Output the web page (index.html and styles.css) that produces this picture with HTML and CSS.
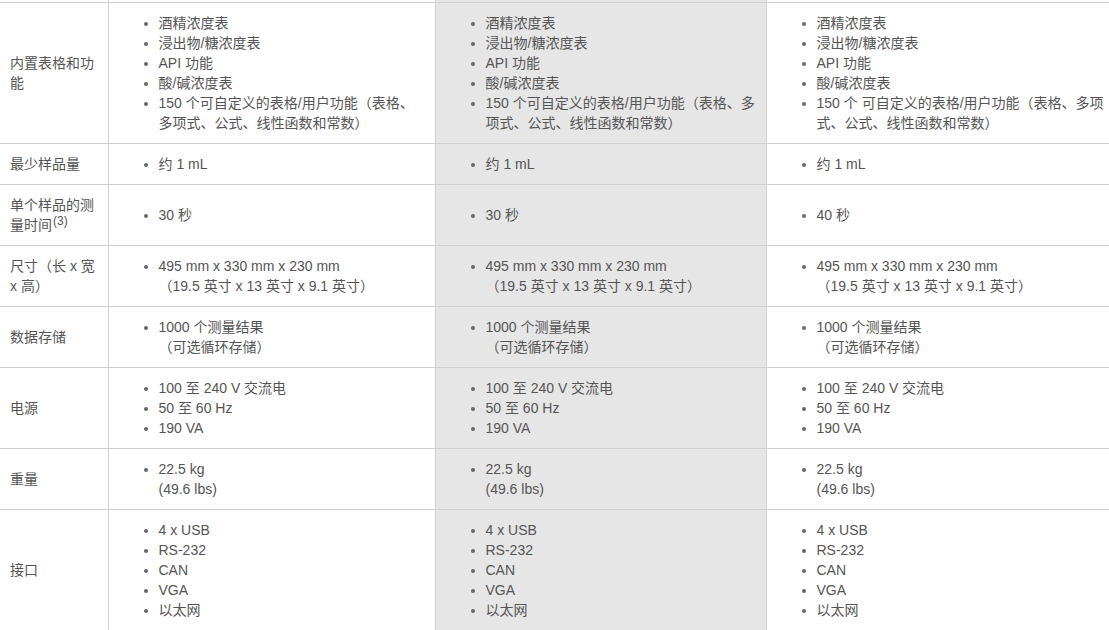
FILE: index.html
```html
<!DOCTYPE html>
<html lang="zh-CN">
<head>
<meta charset="utf-8">
<title>规格</title>
<link rel="stylesheet" href="styles.css">
</head>
<body>
<table class="spec">
  <colgroup>
    <col class="c-label">
    <col class="c-a">
    <col class="c-b">
    <col class="c-c">
  </colgroup>
  <tbody>
    <tr class="cut"><td></td><td></td><td class="alt"></td><td></td></tr>
    <tr>
      <td class="label">内置表格和功能</td>
      <td><ul><li>酒精浓度表</li><li>浸出物/糖浓度表</li><li>API 功能</li><li>酸/碱浓度表</li><li>150 个可自定义的表格/用户功能（表格、多项式、公式、线性函数和常数）</li></ul></td>
      <td class="alt"><ul><li>酒精浓度表</li><li>浸出物/糖浓度表</li><li>API 功能</li><li>酸/碱浓度表</li><li>150 个可自定义的表格/用户功能（表格、多项式、公式、线性函数和常数）</li></ul></td>
      <td><ul><li>酒精浓度表</li><li>浸出物/糖浓度表</li><li>API 功能</li><li>酸/碱浓度表</li><li>150 个 可自定义的表格/用户功能（表格、多项式、公式、线性函数和常数）</li></ul></td>
    </tr>
    <tr>
      <td class="label">最少样品量</td>
      <td><ul><li>约 1 mL</li></ul></td>
      <td class="alt"><ul><li>约 1 mL</li></ul></td>
      <td><ul><li>约 1 mL</li></ul></td>
    </tr>
    <tr>
      <td class="label">单个样品的测量时间<sup class="note">(3)</sup></td>
      <td><ul><li>30 秒</li></ul></td>
      <td class="alt"><ul><li>30 秒</li></ul></td>
      <td><ul><li>40 秒</li></ul></td>
    </tr>
    <tr>
      <td class="label">尺寸（长 x 宽 x 高）</td>
      <td><ul><li>495 mm x 330 mm x 230 mm<br>（19.5 英寸 x 13 英寸 x 9.1 英寸）</li></ul></td>
      <td class="alt"><ul><li>495 mm x 330 mm x 230 mm<br>（19.5 英寸 x 13 英寸 x 9.1 英寸）</li></ul></td>
      <td><ul><li>495 mm x 330 mm x 230 mm<br>（19.5 英寸 x 13 英寸 x 9.1 英寸）</li></ul></td>
    </tr>
    <tr>
      <td class="label">数据存储</td>
      <td><ul><li>1000 个测量结果<br>（可选循环存储）</li></ul></td>
      <td class="alt"><ul><li>1000 个测量结果<br>（可选循环存储）</li></ul></td>
      <td><ul><li>1000 个测量结果<br>（可选循环存储）</li></ul></td>
    </tr>
    <tr>
      <td class="label">电源</td>
      <td><ul><li>100 至 240 V 交流电</li><li>50 至 60 Hz</li><li>190 VA</li></ul></td>
      <td class="alt"><ul><li>100 至 240 V 交流电</li><li>50 至 60 Hz</li><li>190 VA</li></ul></td>
      <td><ul><li>100 至 240 V 交流电</li><li>50 至 60 Hz</li><li>190 VA</li></ul></td>
    </tr>
    <tr>
      <td class="label">重量</td>
      <td><ul><li>22.5 kg<br>(49.6 lbs)</li></ul></td>
      <td class="alt"><ul><li>22.5 kg<br>(49.6 lbs)</li></ul></td>
      <td><ul><li>22.5 kg<br>(49.6 lbs)</li></ul></td>
    </tr>
    <tr>
      <td class="label">接口</td>
      <td><ul><li>4 x USB</li><li>RS-232</li><li>CAN</li><li>VGA</li><li>以太网</li></ul></td>
      <td class="alt"><ul><li>4 x USB</li><li>RS-232</li><li>CAN</li><li>VGA</li><li>以太网</li></ul></td>
      <td><ul><li>4 x USB</li><li>RS-232</li><li>CAN</li><li>VGA</li><li>以太网</li></ul></td>
    </tr>
  </tbody>
</table>
</body>
</html>
```

FILE: styles.css
```css
html, body {
  margin: 0;
  padding: 0;
  overflow: hidden;
  background: #fff;
}

body {
  font-family: "Liberation Sans", "Noto Sans CJK SC", "Noto Sans CJK JP", "Noto Sans CJK TC", sans-serif;
  font-size: 14px;
  line-height: 20px;
  color: #555;
}

.spec {
  border-collapse: collapse;
  table-layout: fixed;
  width: 1116px;
}

.c-label { width: 108px; }
.c-a { width: 327px; }
.c-b { width: 331px; }
.c-c { width: 350px; }

.spec td {
  border: 1px solid #d0d0d0;
  padding: 10px;
  vertical-align: middle;
  text-align: left;
}

.spec tr:first-child td { border-top: none; }
.spec td:first-child { border-left: none; }

.spec td.alt {
  background: #e6e6e6;
}

.spec tr.cut td {
  height: 2px;
  padding: 0;
  line-height: 0;
  font-size: 0;
}

.spec ul {
  margin: 0;
  padding-left: 40px;
  list-style: disc;
}

.spec li::marker {
  color: #666;
}

.spec .note {
  display: inline-block;
  font-size: 12px;
  line-height: 12px;
  vertical-align: top;
  margin-left: 1px;
}
```
